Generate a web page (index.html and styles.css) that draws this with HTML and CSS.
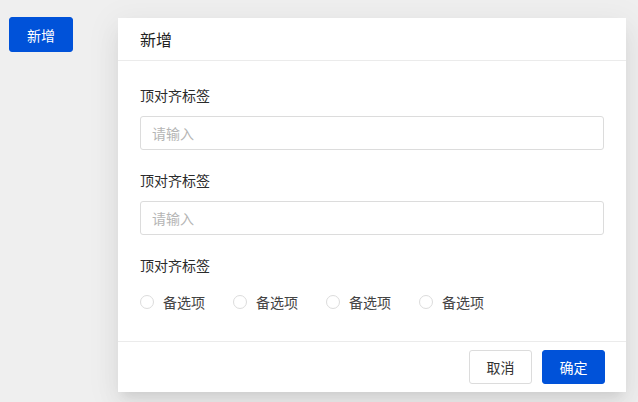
FILE: index.html
```html
<!DOCTYPE html>
<html lang="zh-CN">
<head>
<meta charset="utf-8">
<title>新增</title>
<link rel="stylesheet" href="styles.css">
</head>
<body>
<div class="page">
  <button class="btn btn-primary btn-open">新增</button>
  <div class="dialog">
    <div class="dialog-header">新增</div>
    <div class="dialog-body">
      <div class="form-item">
        <div class="form-label">顶对齐标签</div>
        <input class="input" type="text" placeholder="请输入">
      </div>
      <div class="form-item">
        <div class="form-label">顶对齐标签</div>
        <input class="input" type="text" placeholder="请输入">
      </div>
      <div class="form-item">
        <div class="form-label">顶对齐标签</div>
        <div class="radio-group">
          <label class="radio"><span class="radio-dot"></span><span class="radio-text">备选项</span></label>
          <label class="radio"><span class="radio-dot"></span><span class="radio-text">备选项</span></label>
          <label class="radio"><span class="radio-dot"></span><span class="radio-text">备选项</span></label>
          <label class="radio"><span class="radio-dot"></span><span class="radio-text">备选项</span></label>
        </div>
      </div>
    </div>
    <div class="dialog-footer">
      <button class="btn btn-default">取消</button>
      <button class="btn btn-primary">确定</button>
    </div>
  </div>
</div>
</body>
</html>
```
FILE: styles.css
```css
* { box-sizing: border-box; }
html, body { margin: 0; padding: 0; }
body {
  background: #efefef;
  font-family: "Noto Sans CJK SC", "Noto Sans", sans-serif;
  font-size: 14px;
  color: #333;
  width: 638px;
  height: 402px;
  overflow: hidden;
}
.page {
  display: flex;
  align-items: flex-start;
  padding: 17px 0 0 9px;
  gap: 45px;
}
.btn {
  font-family: inherit;
  font-size: 14px;
  line-height: 22px;
  height: 34px;
  padding: 0 15px;
  border-radius: 3px;
  border: 1px solid transparent;
  cursor: pointer;
}
.btn-primary {
  background: #0052d9;
  border-color: #0052d9;
  color: #fff;
}
.btn-default {
  background: #fff;
  border-color: #dcdcdc;
  color: #333;
}
.btn-open {
  width: 64px;
  height: 35px;
}
.dialog {
  margin-top: 1px;
  width: 508px;
  background: #fff;
  box-shadow: 0 6px 30px 5px rgba(0,0,0,.05), 0 16px 24px 2px rgba(0,0,0,.04), 0 8px 10px -5px rgba(0,0,0,.08);
}
.dialog-header {
  height: 43px;
  display: flex;
  align-items: center;
  padding: 0 22px;
  font-size: 16px;
  color: #222;
  border-bottom: 1px solid #ebebeb;
}
.dialog-body {
  padding: 24px 22px 23px;
  display: flex;
  flex-direction: column;
  gap: 20px;
}
.form-item {
  display: flex;
  flex-direction: column;
  gap: 11px;
}
.form-label {
  line-height: 20px;
  color: #2b2b2b;
}
.input {
  height: 34px;
  width: 100%;
  border: 1px solid #dcdcdc;
  border-radius: 3px;
  padding: 0 11px;
  font-family: inherit;
  font-size: 14px;
  color: #333;
  outline: none;
}
.input::placeholder { color: #b5b5b5; }
.radio-group {
  display: flex;
  gap: 28px;
  height: 32px;
  align-items: center;
}
.radio {
  display: flex;
  align-items: center;
  gap: 9px;
  color: #444;
}
.radio-dot {
  width: 14px;
  height: 14px;
  border: 1px solid #dcdcdc;
  border-radius: 50%;
  background: #fff;
}
.radio-text { line-height: 22px; }
.dialog-footer {
  border-top: 1px solid #ebebeb;
  padding: 8px 21px 8px;
  display: flex;
  justify-content: flex-end;
  gap: 10px;
}
.dialog-footer .btn {
  width: 63px;
  padding: 0;
}
```
